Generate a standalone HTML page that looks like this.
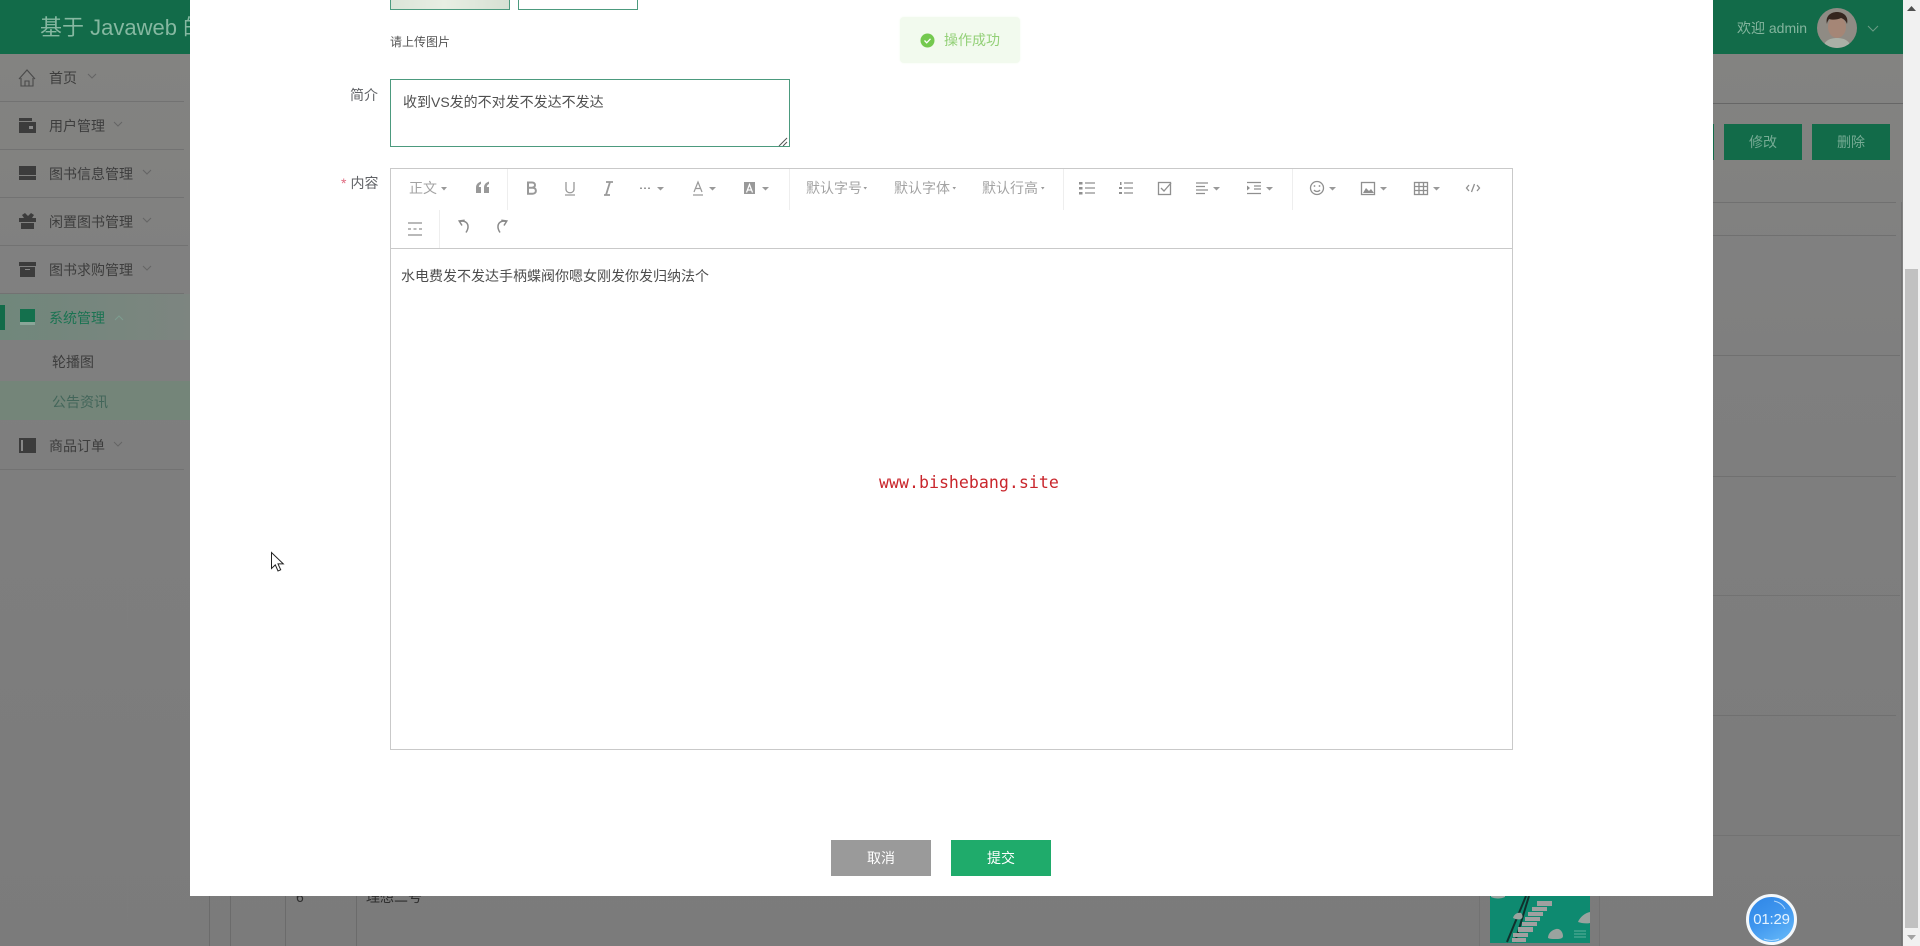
<!DOCTYPE html>
<html lang="zh-CN"><head><meta charset="utf-8"><title>公告资讯</title>
<style>
html,body{margin:0;padding:0;width:1920px;height:946px;overflow:hidden;background:#7f7f7f}
body{position:relative;font-family:"Liberation Sans","Noto Sans CJK SC",sans-serif;font-size:14px;color:#606266;filter:blur(.35px)}
.a{position:absolute;white-space:nowrap}
.c{transform:translateY(-50%)}
.mid{display:flex;align-items:center;justify-content:center}
.line{position:absolute;height:1px}
.nav{position:absolute;left:49px;color:#3d3d3d;font-size:14px;line-height:20px;white-space:nowrap;transform:translateY(-50%)}
.tb{position:absolute;color:#a3a3a3;font-size:14px;line-height:20px;white-space:nowrap;transform:translateY(-50%)}
svg{position:absolute;overflow:visible}
</style></head><body>

<div class="a" style="left:0;top:54px;width:1903px;height:892px;background:linear-gradient(180deg,#838381 0,#7f7f7f 300px,#7b7b7b 100%)"></div>
<div class="a" style="left:0;top:0;width:1903px;height:54px;background:#126b49"></div>
<div class="a c" style="left:40px;top:28px;font-size:22px;line-height:30px;color:#86b8a1;width:150px;overflow:hidden">基于 Javaweb 的图书</div>
<div class="a c" style="left:1737px;top:28px;font-size:14px;line-height:20px;color:#84b59e">欢迎 admin</div>
<svg style="left:1817px;top:8px" width="40" height="40" viewBox="0 0 40 40"><defs><clipPath id="av"><circle cx="20" cy="20" r="20"/></clipPath></defs><g clip-path="url(#av)"><rect width="40" height="40" fill="#8f8b84"/><path d="M6 40c1-8 8-10 14-10s13 2 14 10z" fill="#aab0a6"/><ellipse cx="20" cy="19" rx="9" ry="11" fill="#a58676"/><path d="M10 16c-2-8 4-12 10-12s12 4 10 12c-1-3-3-5-6-6-4 2-9 2-12 1-1 2-2 3-2 5z" fill="#35261f"/></g></svg>
<svg style="left:1867px;top:25px" width="12" height="7"><path d="M1 1l5 5 5-5" fill="none" stroke="#6a9c85" stroke-width="1"/></svg>

<!-- sidebar -->
<div class="a" style="left:0;top:294px;width:190px;height:46px;background:linear-gradient(90deg,#70877b,#7d8580)"></div>
<div class="a" style="left:0;top:381px;width:190px;height:39px;background:#748579"></div>
<div class="a" style="left:0;top:305px;width:5px;height:25px;background:#126b49"></div>
<div class="line" style="left:0;top:101px;width:184px;background:#727272"></div>
<div class="line" style="left:0;top:149px;width:184px;background:#727272"></div>
<div class="line" style="left:0;top:197px;width:184px;background:#727272"></div>
<div class="line" style="left:0;top:245px;width:188px;background:#727272"></div>
<div class="line" style="left:0;top:293px;width:184px;background:#727272"></div>
<div class="line" style="left:0;top:469px;width:184px;background:#727272"></div>
<div class="nav" style="top:78px">首页</div>
<div class="nav" style="top:126px">用户管理</div>
<div class="nav" style="top:174px">图书信息管理</div>
<div class="nav" style="top:222px">闲置图书管理</div>
<div class="nav" style="top:270px">图书求购管理</div>
<div class="nav" style="top:318px;color:#1b7352">系统管理</div>
<div class="nav" style="top:362px;left:52px">轮播图</div>
<div class="nav" style="top:402px;left:52px;color:#43665a">公告资讯</div>
<div class="nav" style="top:446px">商品订单</div>
<svg style="left:0;top:0" width="190" height="480" viewBox="0 0 190 480">
<g fill="none" stroke="#656565" stroke-width="1"><path d="M88 74l4 4 4-4M114 122l4 4 4-4M143 170l4 4 4-4M143 218l4 4 4-4M143 266l4 4 4-4M114 442l4 4 4-4"/></g>
<path d="M115 320l4-4 4 4" fill="none" stroke="#7d9d8f"/>
<path d="M19 79l8-9 8 9M21 78v8h12v-8M25 86v-5h4v5" fill="none" stroke="#4a4a4a" stroke-width="1.100"/>
<path d="M19 118h13v3h-13zM19 122h17v11h-17z" fill="#3c3c3c"/><rect x="29" y="126" width="4" height="3" fill="#888"/>
<path d="M19 166h17v9h-17zM19 176h17v4h-17z" fill="#3c3c3c"/>
<path d="M19 218h17v4h-17zM21 223h13v6h-13zM22 215l3-2 3 3 3-3 3 2-2 3h-8z" fill="#3c3c3c"/>
<path d="M19 262h17v4h-17zM20 267h15v10h-15z" fill="#3c3c3c"/><rect x="25" y="269" width="5" height="1" fill="#888"/>
<path d="M20 309h15v15h-15z" fill="#14704d"/><rect x="20" y="322" width="15" height="3" fill="#8aa598"/>
<rect x="19" y="438" width="17" height="15" fill="#3c3c3c"/><rect x="21" y="440" width="2" height="11" fill="#888"/>
</svg>

<!-- background table right -->
<div class="line" style="left:1713px;top:103px;width:190px;background:#666"></div>
<div class="line" style="left:1713px;top:202px;width:183px;background:#707070"></div>
<div class="line" style="left:1713px;top:235px;width:183px;background:#707070"></div>
<div class="line" style="left:1713px;top:355px;width:187px;background:#707070"></div>
<div class="line" style="left:1713px;top:476px;width:183px;background:#707070"></div>
<div class="line" style="left:1713px;top:595px;width:187px;background:#727272"></div>
<div class="line" style="left:1713px;top:715px;width:183px;background:#707070"></div>
<div class="line" style="left:1713px;top:835px;width:187px;background:#727272"></div>
<div class="a" style="left:1901px;top:202px;width:1px;height:744px;background:#727272"></div>
<div class="a" style="left:1709px;top:124px;width:5px;height:36px;background:#126b49"></div>
<div class="a mid" style="left:1724px;top:124px;width:78px;height:36px;background:#126b49;color:#76ab94">修改</div>
<div class="a mid" style="left:1812px;top:124px;width:78px;height:36px;background:#126b49;color:#76ab94">删除</div>

<!-- bottom table -->
<div class="a" style="left:209px;top:896px;width:1px;height:50px;background:#6b6b6b"></div>
<div class="a" style="left:230px;top:896px;width:1px;height:50px;background:#6b6b6b"></div>
<div class="a" style="left:285px;top:896px;width:1px;height:50px;background:#6b6b6b"></div>
<div class="a" style="left:356px;top:896px;width:1px;height:50px;background:#6b6b6b"></div>
<div class="a" style="left:1479px;top:896px;width:1px;height:50px;background:#727272"></div>
<div class="a" style="left:1599px;top:896px;width:1px;height:50px;background:#727272"></div>
<div class="a" style="left:296px;top:887px;font-size:14px;line-height:20px;color:#2e2e2e">6</div>
<div class="a" style="left:366px;top:887px;font-size:14px;line-height:20px;color:#2e2e2e">理想二号</div>
<svg style="left:1490px;top:896px" width="100" height="47" viewBox="0 0 100 47"><rect width="100" height="47" fill="#0e8a70"/>
<path d="M36 0l-19 46M39 0l-14 46" stroke="#10302c" stroke-width="2" fill="none"/>
<g fill="#a0a0a0"><rect x="47" y="5" width="15" height="5"/><rect x="42" y="11" width="15" height="4"/><rect x="38" y="16" width="15" height="4"/><rect x="35" y="21" width="15" height="4"/><rect x="32" y="26" width="15" height="4"/><rect x="28" y="31" width="15" height="5"/><rect x="23" y="37" width="15" height="4"/><rect x="22" y="42" width="14" height="4"/></g>
<path d="M23 22c1-4 5-6 8-5 2 2 2 5 0 6-3 1-6 0-8-1zM58 42c0-5 4-8 8-9 4-1 7 3 7 7 0 3-4 3-8 3-3 0-5 0-7-1zM88 26c2-5 7-9 12-10v11c-4 1-9 0-12-1zM1 0h14v1c-4 2-10 2-14 0z" fill="#9aa39f"/>
<g stroke="#5fb09d" fill="none"><path d="M84 35h12M84 38h12M84 41h12"/></g>
</svg>

<!-- scrollbar -->
<div class="a" style="left:1903px;top:0;width:17px;height:946px;background:#f1f1f1"></div>
<div class="a" style="left:1905px;top:269px;width:13px;height:659px;background:#c1c1c1"></div>
<svg style="left:1903px;top:0" width="17" height="946"><path d="M4 11l4.500-5 4.500 5z" fill="#505050"/><path d="M4 935l4.500 5 4.500-5z" fill="#a3a3a3"/></svg>

<!-- modal -->
<div class="a" style="left:190px;top:0;width:1523px;height:896px;background:#fff"></div>

<div class="a" style="left:390px;top:-1px;width:118px;height:9px;border:1px solid #4c9a7e;background:linear-gradient(90deg,#dbe4d8,#e8eee3 45%,#d6e0d3)"></div>
<div class="a" style="left:518px;top:-1px;width:118px;height:9px;border:1px solid #4c9a7e;background:#fff"></div>
<div class="a c" style="left:390px;top:42px;font-size:12px;line-height:16px;color:#555">请上传图片</div>

<div class="a c" style="left:350px;top:95px;line-height:20px;color:#606266">简介</div>
<div class="a" style="left:390px;top:79px;width:398px;height:66px;border:1px solid #4c9a7e"></div>
<div class="a c" style="left:403px;top:102px;line-height:20px;color:#505050">收到VS发的不对发不发达不发达</div>
<svg style="left:777px;top:136px" width="11" height="11"><path d="M2 10l8-8M6 10l4-4" stroke="#555" fill="none"/></svg>

<div class="a c" style="left:341px;top:183px;line-height:20px;color:#606266"><span style="color:#e06a80;margin-right:4px">*</span>内容</div>
<div class="a" style="left:390px;top:168px;width:1121px;height:580px;border:1px solid #c9c9c9"></div>
<div class="line" style="left:391px;top:248px;width:1121px;background:#c9c9c9"></div>

<div class="a" style="left:507px;top:169px;width:1px;height:41px;background:#eee"></div>
<div class="a" style="left:789px;top:169px;width:1px;height:41px;background:#eee"></div>
<div class="a" style="left:1063px;top:169px;width:1px;height:41px;background:#eee"></div>
<div class="a" style="left:1292px;top:169px;width:1px;height:41px;background:#eee"></div>
<div class="a" style="left:439px;top:210px;width:1px;height:38px;background:#eee"></div>

<div class="tb" style="left:409px;top:188px">正文</div>
<div class="tb" style="left:806px;top:188px">默认字号</div>
<div class="tb" style="left:894px;top:188px">默认字体</div>
<div class="tb" style="left:982px;top:188px">默认行高</div>

<svg style="left:0;top:1px" width="1920" height="260" viewBox="0 0 1920 260">
<g fill="#999">
<path d="M441 186h6l-3 3.500zM657 186h7l-3.500 3.500zM709 186h7l-3.500 3.500zM762 186h7l-3.500 3.500zM1213 186h7l-3.500 3.500zM1266 186h7l-3.500 3.500zM1329 186h7l-3.500 3.500zM1380 186h7l-3.500 3.500zM1433 186h7l-3.500 3.500z"/>
<path d="M863.500 186h3.500l-1.750 2.500zM952.500 186h3.500l-1.750 2.500zM1041 186h3.500l-1.750 2.500z"/>
<path d="M476 192v-5c0-3 1-5 5-6.500v2.500c-1.500.5-2 1.500-2.200 3h2.200v6zM484 192v-5c0-3 1-5 5-6.500v2.500c-1.500.5-2 1.500-2.200 3h2.200v6z"/>
<rect x="640" y="186.500" width="2" height="1.500"/><rect x="644" y="186.500" width="2" height="1.500"/><rect x="648" y="186.500" width="2" height="1.500"/>
<path d="M744 181h11v12h-11z"/>
</g>
<path d="M528 181.500h4c4 0 4 5 0 5.200h-4zM528 186.700h4.500c4.500 0 4.500 6 0 6h-4.500z" fill="none" stroke="#999" stroke-width="2"/>
<path d="M566 181v7c0 5 8 5 8 0v-7M565 194h10" fill="none" stroke="#999" stroke-width="1.300"/>
<path d="M606 181h7M604 194h6M610 181l-4 13" fill="none" stroke="#999" stroke-width="1.800"/>
<path d="M694 191l4-10 4 10M695.500 187.500h5M693 194h10" fill="none" stroke="#999" stroke-width="1.200"/>
<path d="M746.500 191.500l3-8 3 8M747.500 189h4" fill="none" stroke="#fff" stroke-width="1.200"/>
<g fill="none" stroke="#8f8f8f" stroke-width="1.300">
<path d="M1085 182h10M1085 187h10M1085 192h10M1124 182h9M1124 187h9M1124 192h9"/>
<rect x="1158.500" y="181.500" width="12" height="12"/><path d="M1161 187l3 3 7-8"/>
<path d="M1196 182h12M1196 185.500h9M1196 189h12M1196 192.500h9"/>
<path d="M1247 181.500h14M1254 185h7M1254 188h7M1247 192.500h14"/>
<circle cx="1317" cy="187" r="6.500"/><path d="M1314 189c1.500 2 4.500 2 6 0"/>
<rect x="1361.500" y="181.500" width="13" height="12"/>
<rect x="1414.500" y="181.500" width="13" height="12"/><path d="M1414 185.500h14M1414 189.500h14M1419 181v12M1423.500 181v12"/>
<path d="M1469 184l-2.500 3 2.500 3M1477 184l2.500 3-2.500 3M1474.500 183l-3 8"/>
<path d="M408 222h14M408 234h14M408 228h3M413.500 228h3M419 228h3"/>
</g>
<path d="M462 224l-2.800-4.500 5.500-.8M459.500 220c4.500-1.200 8 .5 8.500 4.500.3 2.500-.8 4.700-2 6.500" fill="none" stroke="#8a8a8a" stroke-width="1.500" transform="translate(0 .5)"/>
<path d="M499 224l2.800-4.500-5.500-.8M501.500 220c-4.500-1.200-8 .5-8.500 4.500-.3 2.500.8 4.700 2 6.500" fill="none" stroke="#8a8a8a" stroke-width="1.500" transform="translate(5 .5)"/>
<g fill="#8f8f8f"><rect x="1079" y="181" width="3.500" height="2.500"/><rect x="1079" y="186" width="3.500" height="2.500"/><rect x="1079" y="191" width="3.500" height="2.500"/>
<rect x="1120" y="181" width="1.500" height="3"/><rect x="1119" y="186" width="3" height="2"/><rect x="1119" y="191" width="3" height="2"/>
<circle cx="1314.500" cy="185" r=".9"/><circle cx="1319.500" cy="185" r=".9"/>
<path d="M1247 184.500l3 2.500-3 2.500zM1363 192l3-5 3 3 2-2 3 4z"/></g>
</svg>

<div class="a c" style="left:401px;top:276px;line-height:20px;color:#4d4d4d">水电费发不发达手柄蝶阀你嗯女刚发你发归纳法个</div>
<div class="a c" style="left:879px;top:483px;font-family:'DejaVu Sans Mono','Liberation Mono',monospace;font-size:16.6px;line-height:22px;color:#c9262c">www.bishebang.site</div>

<div class="a mid" style="left:831px;top:840px;width:100px;height:36px;background:#9a9a9a;color:#fff">取消</div>
<div class="a mid" style="left:951px;top:840px;width:100px;height:36px;background:#1fab6b;color:#fff">提交</div>

<!-- toast -->
<div class="a" style="left:900px;top:17px;width:120px;height:46px;background:#f2faee;border-radius:4px;box-shadow:0 0 2px #f2faee"></div>
<svg style="left:920px;top:33px" width="15" height="15" viewBox="0 0 15 15"><circle cx="7.500" cy="7.500" r="7" fill="#74c94f"/><path d="M4.500 7.500l2.200 2.300 3.800-4" fill="none" stroke="#fff" stroke-width="1.300"/></svg>
<div class="a c" style="left:944px;top:40px;line-height:20px;color:#93d077">操作成功</div>

<!-- cursor -->
<svg style="left:271px;top:552px" width="14" height="20" viewBox="0 0 14 20"><path d="M.5.500v16l3.800-3.600 2.700 6.100 2.700-1.200-2.700-5.900h5.300z" fill="#fff" stroke="#222" stroke-width="1"/></svg>

<!-- timer -->
<div class="a mid" style="left:1746px;top:894px;width:45px;height:45px;border:3px solid #f4f8fb;border-radius:50%;background:linear-gradient(150deg,#2f86e6,#3e95ee 45%,#69bcfa);color:#e4f3ff;font-size:15px;letter-spacing:-.2px">01:29</div>
<svg style="left:1746px;top:894px" width="51" height="51"><path d="M28 7c5 1 9 4 11 8M18 45c5 2 10 2 15 0" fill="none" stroke="#cfe8ff" stroke-width="1" opacity=".8"/></svg>

</body></html>
